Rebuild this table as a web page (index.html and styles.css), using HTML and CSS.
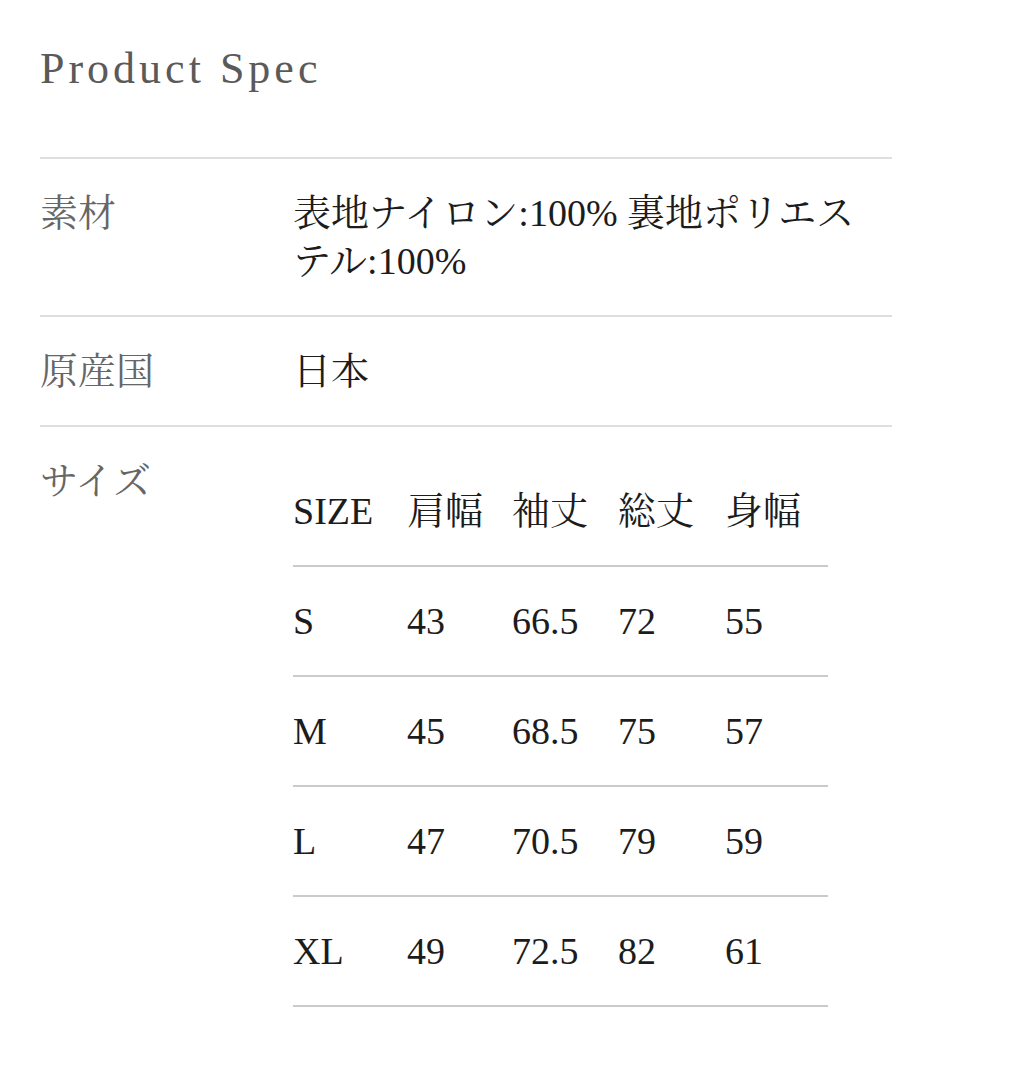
FILE: index.html
```html
<!DOCTYPE html>
<html lang="ja">
<head>
<meta charset="utf-8">
<title>Product Spec</title>
<link rel="stylesheet" href="styles.css">
</head>
<body>
<main class="page">
  <h1 class="title">Product Spec</h1>
  <dl class="spec">
    <div class="spec-row">
      <dt class="spec-label">素材</dt>
      <dd class="spec-value spec-value-wrap">表地ナイロン:100% 裏地ポリエステル:100%</dd>
    </div>
    <div class="spec-row">
      <dt class="spec-label">原産国</dt>
      <dd class="spec-value">日本</dd>
    </div>
    <div class="spec-row spec-row-last">
      <dt class="spec-label">サイズ</dt>
      <dd class="spec-value">
        <table class="size-table">
          <colgroup>
            <col class="c1"><col class="c2"><col class="c3"><col class="c4"><col class="c5">
          </colgroup>
          <thead>
            <tr><th>SIZE</th><th>肩幅</th><th>袖丈</th><th>総丈</th><th>身幅</th></tr>
          </thead>
          <tbody>
            <tr><td>S</td><td>43</td><td>66.5</td><td>72</td><td>55</td></tr>
            <tr><td>M</td><td>45</td><td>68.5</td><td>75</td><td>57</td></tr>
            <tr><td>L</td><td>47</td><td>70.5</td><td>79</td><td>59</td></tr>
            <tr><td>XL</td><td>49</td><td>72.5</td><td>82</td><td>61</td></tr>
          </tbody>
        </table>
      </dd>
    </div>
  </dl>
</main>
</body>
</html>
```
FILE: styles.css
```css
html, body {
  margin: 0;
  padding: 0;
  background: #ffffff;
}

body {
  font-family: "Liberation Serif", "Noto Serif CJK JP", "Noto Sans CJK JP", serif;
  color: #1c1c1c;
}

.page {
  width: 852px;
  padding: 39px 0 0 40px;
}

.title {
  margin: 0 0 58px 0;
  font-family: "Liberation Serif", serif;
  font-weight: normal;
  font-size: 44px;
  line-height: 60px;
  letter-spacing: 4px;
  color: #5a5a5a;
}

.spec {
  margin: 0;
}

.spec-row {
  display: grid;
  grid-template-columns: 253px 1fr;
  border-top: 2px solid #dedede;
  padding: 30px 0;
  font-size: 38px;
  line-height: 48px;
}

.spec-row-last {
  padding-bottom: 0;
}

.spec-label {
  margin: 0;
  color: #666666;
}

.spec-value {
  margin: 0;
  color: #1c1c1c;
}

.spec-value-wrap {
  padding-right: 24px;
}

.size-table {
  border-collapse: collapse;
  table-layout: fixed;
  width: 535px;
  font-size: 38px;
  line-height: 48px;
}

.size-table .c1 { width: 114px; }
.size-table .c2 { width: 105px; }
.size-table .c3 { width: 106px; }
.size-table .c4 { width: 107px; }
.size-table .c5 { width: 103px; }

.size-table th,
.size-table td {
  padding: 30px 0;
  text-align: left;
  font-weight: normal;
  white-space: nowrap;
  border-bottom: 2px solid #cbcbcb;
  vertical-align: top;
}
```
